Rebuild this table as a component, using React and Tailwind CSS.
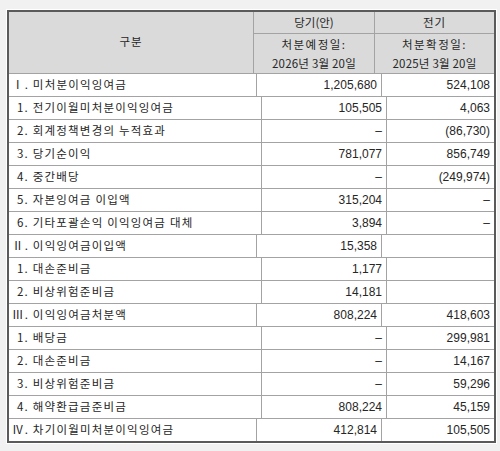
const rows = [
  { label: "Ⅰ. 미처분이익잉여금", a: "1,205,680", b: "524,108", top: true },
  { label: "1. 전기이월미처분이익잉여금", a: "105,505", b: "4,063" },
  { label: "2. 회계정책변경의 누적효과", a: "–", b: "(86,730)" },
  { label: "3. 당기순이익", a: "781,077", b: "856,749" },
  { label: "4. 중간배당", a: "–", b: "(249,974)" },
  { label: "5. 자본잉여금 이입액", a: "315,204", b: "–" },
  { label: "6. 기타포괄손익 이익잉여금 대체", a: "3,894", b: "–" },
  { label: "Ⅱ. 이익잉여금이입액", a: "15,358", b: "", top: true },
  { label: "1. 대손준비금", a: "1,177", b: "" },
  { label: "2. 비상위험준비금", a: "14,181", b: "" },
  { label: "Ⅲ. 이익잉여금처분액", a: "808,224", b: "418,603", top: true },
  { label: "1. 배당금", a: "–", b: "299,981" },
  { label: "2. 대손준비금", a: "–", b: "14,167" },
  { label: "3. 비상위험준비금", a: "–", b: "59,296" },
  { label: "4. 해약환급금준비금", a: "808,224", b: "45,159" },
  { label: "Ⅳ. 차기이월미처분이익잉여금", a: "412,814", b: "105,505", top: true },
];

const ko = { fontFamily: '"Noto Sans CJK KR", "Noto Sans", sans-serif' };
const num = { fontFamily: '"Liberation Sans", Arial, sans-serif' };

export default function App() {
  return (
    <div className="w-[500px] h-[451px] bg-[#f1f1f1] pt-[9px] pl-[6px] text-[#262626]">
      <div className="w-[491px] bg-white p-px">
        <div className="w-[489px] border-2 border-[#5a5a5a] bg-white">
          <div className="flex h-[61px] border-b border-[#a3a3a3] bg-[#dadada] box-content">
            <div className="w-[244px] border-r border-[#a3a3a3] box-content flex items-center justify-center pb-[1px] text-[11.5px] tracking-[1px]" style={ko}>
              구분
            </div>
            <div className="flex-1 flex flex-col">
              <div className="flex h-[21px] border-b border-[#a3a3a3] box-content text-[11.5px]" style={ko}>
                <div className="w-[120px] border-r border-[#a3a3a3] box-content flex items-center justify-center">당기(안)</div>
                <div className="flex-1 flex items-center justify-center tracking-[1px]">전기</div>
              </div>
              <div className="flex flex-1 text-[11.5px]" style={ko}>
                <div className="w-[120px] border-r border-[#a3a3a3] box-content flex flex-col items-center justify-center leading-[19px]">
                  <span className="tracking-[1.5px]">처분예정일:</span>
                  <span className="tracking-[0.2px]">2026년 3월 20일</span>
                </div>
                <div className="flex-1 flex flex-col items-center justify-center leading-[19px]">
                  <span className="tracking-[1.5px]">처분확정일:</span>
                  <span className="tracking-[0.2px]">2025년 3월 20일</span>
                </div>
              </div>
            </div>
          </div>
          {rows.map((r, i) => (
            <div
              key={i}
              className={`flex h-[22px] box-content ${i < rows.length - 1 ? "border-b border-[#a3a3a3]" : ""}`}
            >
              <div
                className={`w-[244px] border-r border-[#a3a3a3] box-content flex items-center text-[11.5px] tracking-[1.2px] whitespace-nowrap ${r.top ? "pl-[3px]" : "pl-[8px]"}`}
                style={ko}
              >
                {r.label}
              </div>
              <div className="w-[120px] border-r border-[#a3a3a3] box-content flex items-center justify-end pr-[4px] text-[12px]" style={num}>
                {r.a}
              </div>
              <div className="flex-1 flex items-center justify-end pr-[4px] text-[12px]" style={num}>
                {r.b}
              </div>
            </div>
          ))}
        </div>
      </div>
    </div>
  );
}
